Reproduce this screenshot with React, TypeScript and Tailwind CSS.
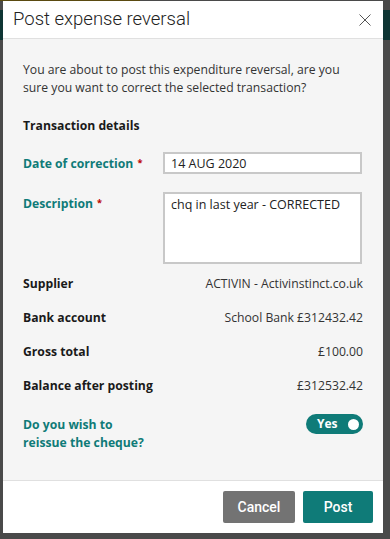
import React from 'react'

const teal = 'text-[#0f7b78]'

function Row({ label, value }: { label: string; value: string }) {
  return (
    <div className="flex items-center justify-between h-[18px] leading-[18px]">
      <span className="font-bold text-[#1a1a1a]">{label}</span>
      <span className="text-[#333]">{value}</span>
    </div>
  )
}

export default function App() {
  return (
    <div
      className="relative w-[390px] h-[539px] overflow-hidden bg-[#4a4a4a] pt-[1px] pl-[3px]"
      style={{ fontFamily: '"Open Sans", "Noto Sans", sans-serif' }}
    >
      {/* faint page behind the overlay */}
      <div className="absolute left-0 top-0 w-[140px] h-[1px] bg-[#5a4a10]" />
      <div className="absolute left-0 top-[10px] w-full h-[30px] bg-[#0e3534]" />

      <div className="relative flex flex-col w-[380px] h-[532px] bg-[#f5f5f5]">
        {/* header */}
        <div className="flex items-center justify-between h-[38px] bg-white border-b border-[#e0e0e0] pl-[10px] pr-[12px]">
          <h1
            className="text-[18.5px] font-light text-[#222] leading-none"
            style={{ fontFamily: 'Roboto, "Liberation Sans", sans-serif' }}
          >
            Post expense reversal
          </h1>
          <svg width="12" height="12" viewBox="0 0 12 12" className="text-[#555]">
            <path d="M0.5 0.5l11 11M11.5 0.5l-11 11" stroke="currentColor" strokeWidth="1" fill="none" />
          </svg>
        </div>

        {/* body */}
        <div className="flex-1 px-[20px] pt-[22px] text-[12.2px] leading-[18px]">
          <p className="text-[#333]">
            You are about to post this expenditure reversal, are you sure you want to correct the selected transaction?
          </p>
          <h2 className="mt-[20px] font-bold text-[#1a1a1a]">Transaction details</h2>

          <div className="flex items-center mt-[17px]">
            <label className={`w-[140px] pt-[2px] font-bold ${teal}`}>
              Date of correction<sup className="relative -top-[2px] text-[#b00] ml-[4px]">*</sup>
            </label>
            <input
              defaultValue="14 AUG 2020"
              className="w-[199px] h-[22px] border-2 border-[#c8c8c8] bg-white px-[6px] text-[12.5px] text-[#222] outline-none"
            />
          </div>

          <div className="flex items-start mt-[18px]">
            <label className={`w-[140px] pt-[3px] font-bold ${teal}`}>
              Description<sup className="relative -top-[2px] text-[#b00] ml-[4px]">*</sup>
            </label>
            <textarea
              defaultValue="chq in last year - CORRECTED"
              className="w-[199px] h-[72px] border-2 border-[#c8c8c8] bg-white px-[6px] py-[2px] text-[12.5px] text-[#222] outline-none resize-none"
            />
          </div>

          <div className="flex flex-col gap-[16px] mt-[11px]">
            <Row label="Supplier" value="ACTIVIN - Activinstinct.co.uk" />
            <Row label="Bank account" value="School Bank £312432.42" />
            <Row label="Gross total" value="£100.00" />
            <Row label="Balance after posting" value="£312532.42" />
          </div>

          <div className="flex items-start justify-between mt-[19px]">
            <span className={`font-bold pt-[2px] ${teal}`}>
              Do you wish to
              <br />
              reissue the cheque?
            </span>
            <button className="flex items-center justify-between w-[57px] h-[20px] rounded-full bg-[#0f7b78] pl-[11px] pr-[4px]">
              <span className="text-[12px] font-bold text-white leading-none">Yes</span>
              <span className="w-[11px] h-[11px] rounded-full bg-white" />
            </button>
          </div>
        </div>

        {/* footer */}
        <div
          className="flex items-center justify-end gap-[8px] h-[53px] bg-white border-t border-[#e0e0e0] pr-[10px]"
          style={{ fontFamily: 'Roboto, "Liberation Sans", sans-serif' }}
        >
          <button className="w-[72px] h-[32px] rounded-[2px] bg-[#737373] text-white text-[14px] font-medium">
            Cancel
          </button>
          <button className="w-[70px] h-[32px] rounded-[2px] bg-[#0f7b78] text-white text-[14px] font-medium">
            Post
          </button>
        </div>
      </div>
    </div>
  )
}
